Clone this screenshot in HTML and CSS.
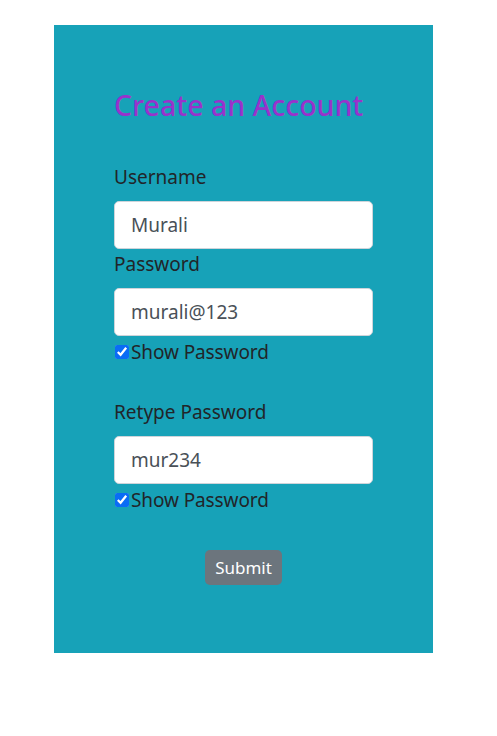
FILE: index.html
```html
<!DOCTYPE html>
<html>
<head>
<meta charset="utf-8">
<link rel="stylesheet" href="styles.css">
</head>
<body>
<div class="card">
  <h2 class="title">Create an Account</h2>
  <form class="form">
    <label class="label first">Username</label>
    <input class="field" type="text" value="Murali">
    <label class="label">Password</label>
    <input class="field" type="text" value="murali@123">
    <div class="check"><input type="checkbox" checked><span>Show Password</span></div>
    <label class="label retype">Retype Password</label>
    <input class="field" type="text" value="mur234">
    <div class="check"><input type="checkbox" checked><span>Show Password</span></div>
    <div class="actions"><button class="btn" type="button">Submit</button></div>
  </form>
</div>
</body>
</html>
```
FILE: styles.css
```css
html, body { margin: 0; padding: 0; background: #fff; }
body { font-family: "Noto Sans", "Open Sans", sans-serif; color: #212529; }
.card {
  box-sizing: border-box;
  width: 379px;
  height: 628px;
  margin: 25px 0 0 54px;
  padding: 58px 60px 0 60px;
  background: #17a2b8;
}
.title {
  margin: 0;
  font-size: 28.5px;
  font-weight: 500;
  line-height: 44px;
  color: #9932cc;
}
.form { display: flex; flex-direction: column; }
.label { font-size: 19px; line-height: 30px; display: block; margin-bottom: 9px; }
.label.first { margin-top: 35px; }
.label.retype { margin-top: 30px; }
.field {
  box-sizing: border-box;
  width: 259px;
  height: 48px;
  margin: 0;
  padding: 0 16px;
  font-family: inherit;
  font-size: 19px;
  color: #495057;
  background: #fff;
  border: 1px solid #ced4da;
  border-radius: 5px;
}
.check { display: flex; align-items: center; height: 31px; font-size: 19px; line-height: 30px; letter-spacing: -0.1px; }
.check input { width: 14px; height: 14px; margin: 0 2px 0 1px; accent-color: #0a6cf5; }
.actions { display: flex; justify-content: center; margin-top: 35px; }
.btn {
  font-family: inherit;
  font-size: 17px;
  line-height: 27px;
  padding: 4px 10px;
  color: #fff;
  background: #6c757d;
  border: none;
  border-radius: 5px;
}
```
